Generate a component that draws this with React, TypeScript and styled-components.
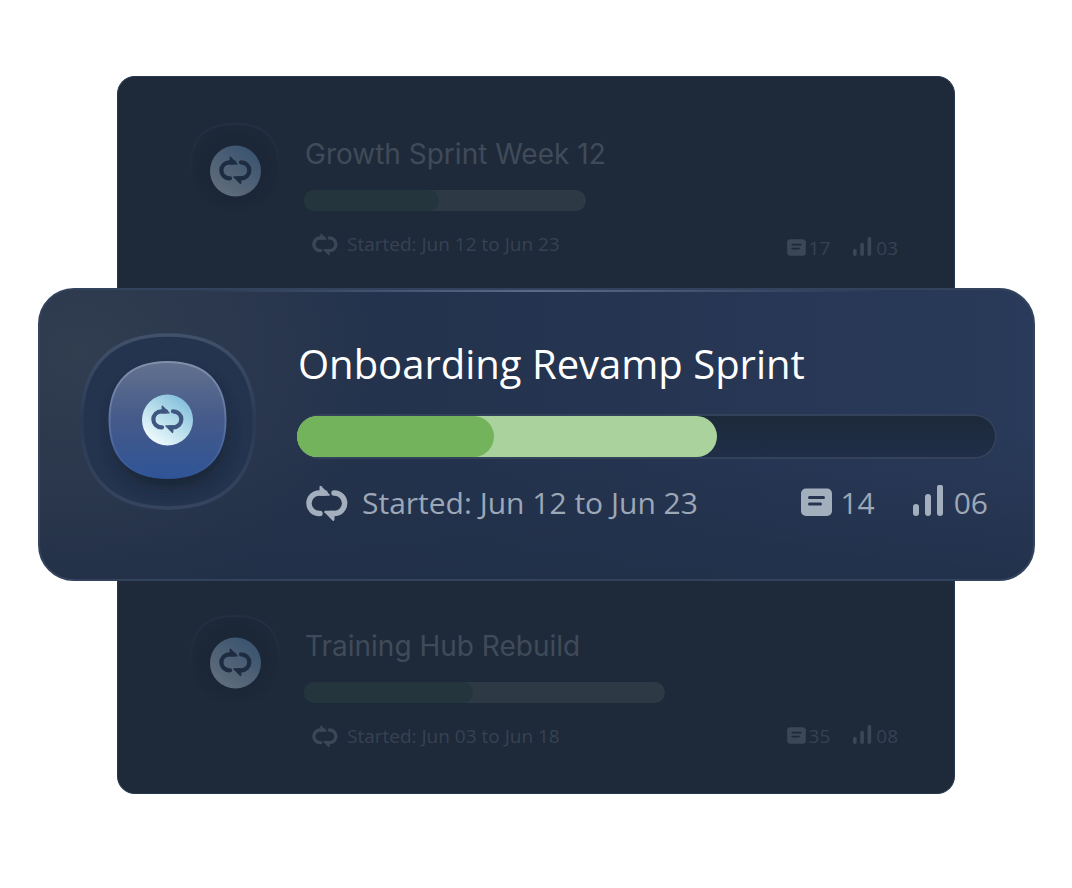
import React from 'react';
import styled, { createGlobalStyle, css } from 'styled-components';

const Global = createGlobalStyle`
  *, *::before, *::after { box-sizing: border-box; }
  body { margin: 0; background: #ffffff; font-family: "Open Sans", "Noto Sans", sans-serif; }
  h2, p, ul { margin: 0; padding: 0; }
`;

const Page = styled.main`
  display: flex;
  flex-direction: column;
  padding: 76px 37px 76px 38px;
`;

const MutedCard = styled.article<{ $edge: 'top' | 'bottom' }>`
  display: flex;
  align-items: flex-start;
  gap: 24px;
  margin: 0 80px 0 79px;
  background: #1e2a39;
  border: 1px solid #26384c;
  ${p => p.$edge === 'top'
    ? css`padding: 44px 56px 24px 68px; border-bottom: 0; border-radius: 18px 18px 0 0;`
    : css`padding: 32px 56px 41px 68px; border-top: 0; border-radius: 0 0 18px 18px;`}
`;

const FeatureCard = styled.article`
  display: flex;
  align-items: flex-start;
  gap: 37px;
  padding: 38px 36px 52px 36px;
  border: 2px solid #33435d;
  border-radius: 36px;
  background:
    linear-gradient(90deg, transparent 15%, #5b6b88 50%, transparent 85%) top / 100% 2px no-repeat,
    radial-gradient(ellipse 30% 90% at 4% 22%, rgba(50, 62, 80, 0.9) 0%, transparent 100%),
    linear-gradient(180deg, transparent 50%, rgba(32, 46, 70, 0.7) 100%),
    linear-gradient(90deg, #25324a 0%, #24334e 45%, #293a5a 100%);
`;

const Body = styled.div`
  flex: 1;
  min-width: 0;
  display: flex;
  flex-direction: column;
`;

const Title = styled.h2<{ $large?: boolean }>`
  font-weight: 400;
  white-space: nowrap;
  ${p => p.$large
    ? css`font-size: 40px; line-height: 72px; padding-left: 1px; color: #ffffff;`
    : css`font-family: Inter, sans-serif; font-size: 28px; line-height: 66px; padding-left: 1px; color: #404b5a;`}
`;

const Track = styled.div<{ $large?: boolean }>`
  display: flex;
  border-radius: 24px;
  ${p => p.$large
    ? css`height: 45px; padding: 2px 0; margin-top: 14px;
        background: linear-gradient(180deg, #1c2939, #202e48);
        box-shadow: inset 0 0 0 2px #33415a;`
    : css`height: 21px; margin-top: 3px;`}
`;

const Committed = styled.div<{ $large?: boolean }>`
  display: flex;
  border-radius: 24px;
  background: ${p => (p.$large ? '#a9d29c' : '#2d3945')};
`;

const Done = styled.div<{ $large?: boolean }>`
  border-radius: 24px;
  background: ${p => (p.$large ? '#73b35c' : '#25353d')};
`;

const Meta = styled.div<{ $large?: boolean }>`
  display: flex;
  align-items: flex-start;
  justify-content: space-between;
  ${p => p.$large
    ? css`margin-top: 20px; padding: 0 9px; font-size: 30px; line-height: 48px; color: #9ca7b7;`
    : css`margin-top: 17px; padding-left: 8px; font-size: 19px; line-height: 32px; color: #364252;`}
`;

const Period = styled.p<{ $large?: boolean }>`
  display: flex;
  align-items: center;
  gap: ${p => (p.$large ? 14 : 9)}px;
  white-space: nowrap;
`;

const Counts = styled.ul<{ $large?: boolean; $lowered?: boolean }>`
  display: flex;
  list-style: none;
  padding-top: ${p => (p.$lowered ? 4 : 0)}px;
  gap: ${p => (p.$large ? 38 : 23)}px;
`;

const Count = styled.li<{ $large?: boolean }>`
  display: flex;
  align-items: center;
  gap: ${p => (p.$large ? 8 : 3)}px;
`;

const Drawing = styled.svg`
  display: block;
  flex: none;
`;

const Glyph = styled(Drawing)<{ $large?: boolean }>`
  color: ${p => (p.$large ? '#a4afbe' : '#3b4757')};
`;

/* The loop glyph fills a 42 x 37 box. */
const LoopPaths = () => (
  <>
    <path d="M14 28.500 H13.200 A10.250 10.250 0 0 1 13.200 8 H19" fill="none" stroke="currentColor" strokeWidth="5.400" strokeLinecap="round" />
    <path d="M28 8 H28.400 A10.250 10.250 0 0 1 28.400 28.500 H24" fill="none" stroke="currentColor" strokeWidth="5.400" strokeLinecap="round" />
    <path d="M13.500 2 Q13.800 0 15.300 1.200 L23.600 9.500 Q24.500 10.800 23 10.800 H13.500 Z" fill="currentColor" />
    <path d="M28.500 34.500 Q28.200 36.800 26.500 35.400 L18.400 27.200 Q17.800 25.900 19.200 25.800 H28.500 Z" fill="currentColor" />
  </>
);

const LoopIcon = ({ large }: { large?: boolean }) => (
  <Glyph $large={large} width={large ? 42 : 26} height={large ? 37 : 23} viewBox="0 0 42 37" aria-hidden="true"><LoopPaths /></Glyph>
);

const NoteIcon = ({ large }: { large?: boolean }) => (
  <Glyph $large={large} width={large ? 31 : 19} height={large ? 30 : 18} viewBox="0 0 31 30" aria-hidden="true">
    <rect y="0.500" width="31" height="27.500" rx="5" fill="currentColor" />
    <path d="M8.500 9.500 H22.500 M8.500 16 H19.500" stroke={large ? '#26344f' : '#1e2a39'} strokeWidth="3" strokeLinecap="round" />
  </Glyph>
);

const BarsIcon = ({ large }: { large?: boolean }) => (
  <Glyph $large={large} width={large ? 33 : 20} height={large ? 37 : 23} viewBox="0 0 33 37" aria-hidden="true">
    <path d="M3 22 V28 M15 12 V28 M27 2.500 V28" stroke="currentColor" strokeWidth="6" strokeLinecap="round" />
  </Glyph>
);

const squircle = (cx: number, cy: number, r: number, k: number) => {
  const c = r * k;
  return `M${cx - r} ${cy} C${cx - r} ${cy - c} ${cx - c} ${cy - r} ${cx} ${cy - r} S${cx + r} ${cy - c} ${cx + r} ${cy} S${cx + c} ${cy + r} ${cx} ${cy + r} S${cx - r} ${cy + c} ${cx - r} ${cy} Z`;
};

const FeatureBadge = () => (
  <Drawing width="184" height="190" viewBox="76 328 184 190" aria-hidden="true">
    <defs>
      <linearGradient id="ring" x1="0" y1="0" x2="0" y2="1">
        <stop offset="0" stopColor="#42516a" /><stop offset="0.5" stopColor="#2a3a55" /><stop offset="1" stopColor="#36445f" />
      </linearGradient>
      <linearGradient id="tile" x1="0" y1="0" x2="0" y2="1">
        <stop offset="0" stopColor="#62718e" /><stop offset="0.5" stopColor="#455a8a" /><stop offset="1" stopColor="#2f5496" />
      </linearGradient>
      <linearGradient id="tileEdge" x1="0" y1="0" x2="0" y2="1">
        <stop offset="0" stopColor="#8290ad" /><stop offset="0.6" stopColor="#566d9f" /><stop offset="1" stopColor="#2f5496" />
      </linearGradient>
      <linearGradient id="disc" x1="0.2" y1="0.9" x2="0.8" y2="0.1">
        <stop offset="0" stopColor="#edf8fc" /><stop offset="0.5" stopColor="#b9dfec" /><stop offset="1" stopColor="#86c0dc" />
      </linearGradient>
      <filter id="shade" x="-40%" y="-40%" width="180%" height="180%"><feGaussianBlur stdDeviation="8" /></filter>
    </defs>
    <path d={squircle(168, 421.5, 86.5, 0.65)} fill="#24334e" stroke="url(#ring)" strokeWidth="3.500" />
    <path d={squircle(170, 431, 56, 0.65)} fill="#17212f" opacity="0.8" filter="url(#shade)" />
    <path d={squircle(167.5, 420, 58, 0.65)} fill="url(#tile)" stroke="url(#tileEdge)" strokeWidth="2" />
    <circle cx="167.500" cy="420" r="25.500" fill="url(#disc)" />
    <svg x="151" y="405" width="33" height="29" viewBox="0 0 42 37" color="#3f5680"><LoopPaths /></svg>
  </Drawing>
);

const MutedBadge = () => (
  <Drawing width="94" height="96" viewBox="0 0 94 96" aria-hidden="true">
    <defs>
      <linearGradient id="mutedDisc" x1="0.2" y1="0.9" x2="0.8" y2="0.1">
        <stop offset="0" stopColor="#5f6c7a" /><stop offset="1" stopColor="#3b5470" />
      </linearGradient>
      <linearGradient id="mutedRing" x1="0" y1="0" x2="0" y2="1">
        <stop offset="0" stopColor="#223041" /><stop offset="0.6" stopColor="#1e2a39" />
      </linearGradient>
      <radialGradient id="mutedWell">
        <stop offset="0.7" stopColor="#1b2737" /><stop offset="1" stopColor="#1d2938" />
      </radialGradient>
    </defs>
    <path d={squircle(49, 47, 44, 0.68)} fill="url(#mutedWell)" stroke="url(#mutedRing)" strokeWidth="2" />
    <circle cx="49.500" cy="50" r="25.500" fill="url(#mutedDisc)" />
    <svg x="33" y="35" width="33" height="29" viewBox="0 0 42 37" color="#1e2c41"><LoopPaths /></svg>
  </Drawing>
);

interface Sprint {
  title: string;
  period: string;
  notes: string;
  level: string;
  committed: number;
  done: number;
}

const SprintBody = ({ sprint, large, lowered }: { sprint: Sprint; large?: boolean; lowered?: boolean }) => (
  <Body>
    <Title $large={large}>{sprint.title}</Title>
    <Track $large={large} role="progressbar" aria-label={sprint.title} aria-valuenow={sprint.committed}>
      <Committed $large={large} style={{ width: `${sprint.committed}%` }}>
        <Done $large={large} style={{ width: `${sprint.done}%` }} />
      </Committed>
    </Track>
    <Meta $large={large}>
      <Period $large={large}><LoopIcon large={large} />{sprint.period}</Period>
      <Counts $large={large} $lowered={lowered}>
        <Count $large={large}><NoteIcon large={large} />{sprint.notes}</Count>
        <Count $large={large}><BarsIcon large={large} />{sprint.level}</Count>
      </Counts>
    </Meta>
  </Body>
);

const growth: Sprint = { title: 'Growth Sprint Week 12', period: 'Started: Jun 12 to Jun 23', notes: '17', level: '03', committed: 47.5, done: 48 };
const onboarding: Sprint = { title: 'Onboarding Revamp Sprint', period: 'Started: Jun 12 to Jun 23', notes: '14', level: '06', committed: 60, done: 47 };
const training: Sprint = { title: 'Training Hub Rebuild', period: 'Started: Jun 03 to Jun 18', notes: '35', level: '08', committed: 60.7, done: 47 };

export default function App() {
  return (
    <>
      <Global />
      <Page>
        <MutedCard $edge="top"><MutedBadge /><SprintBody sprint={growth} lowered /></MutedCard>
        <FeatureCard><FeatureBadge /><SprintBody sprint={onboarding} large /></FeatureCard>
        <MutedCard $edge="bottom"><MutedBadge /><SprintBody sprint={training} /></MutedCard>
      </Page>
    </>
  );
}
